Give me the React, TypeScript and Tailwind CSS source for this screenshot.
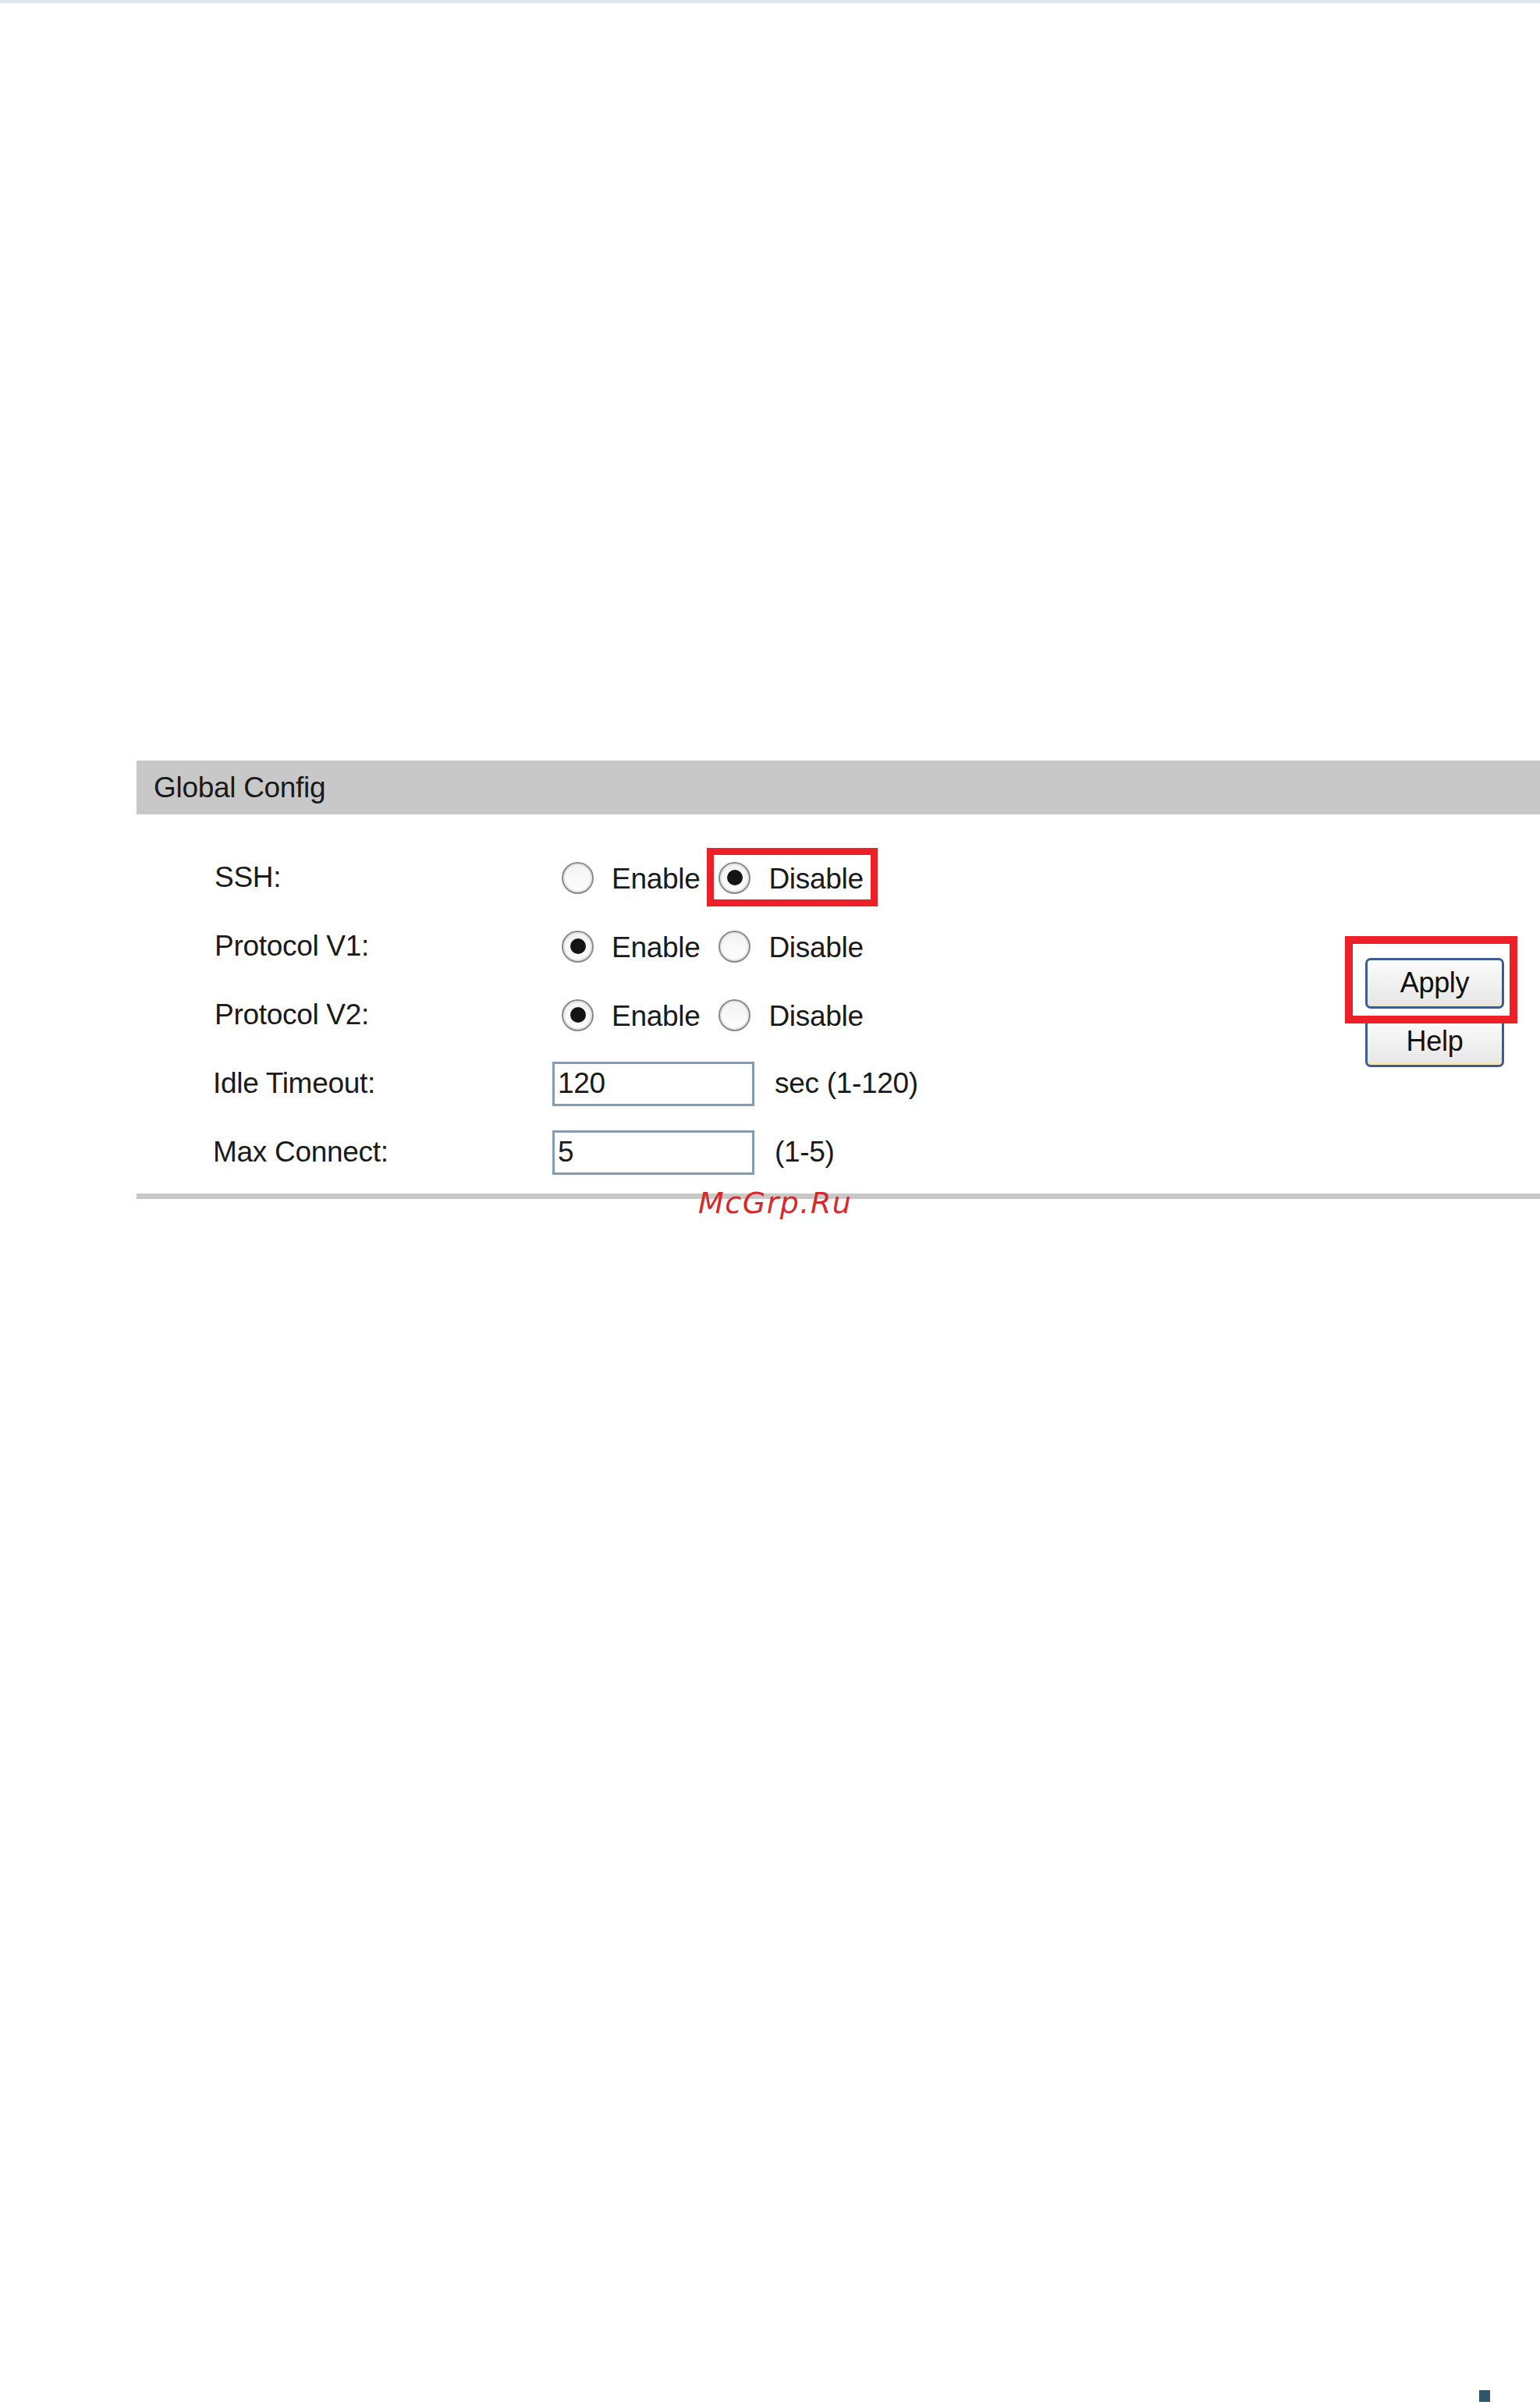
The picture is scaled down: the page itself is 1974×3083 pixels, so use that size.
const Radio = ({ checked }: { checked?: boolean }) => (
  <span className="flex h-[41px] w-[41px] shrink-0 items-center justify-center rounded-full border-[2px] border-[#8a8a8a] bg-gradient-to-b from-[#f2f2f2] to-white shadow-[inset_0_0_0_2px_#e4e4e4]">
    {checked && <span className="h-[20px] w-[20px] rounded-full bg-[#141414]" />}
  </span>
)

const Option = ({ label, checked, marked }: { label: string; checked?: boolean; marked?: boolean }) => (
  <span className="relative flex items-center gap-[23px]">
    <Radio checked={checked} />
    <span className="pt-[3px]">{label}</span>
    {marked && (
      <span className="pointer-events-none absolute -left-[15px] -top-[9px] h-[75px] w-[219px] border-[9px] border-[#ee2027]" />
    )}
  </span>
)

const RadioRow = ({ label, enabled, marked }: { label: string; enabled: boolean; marked?: boolean }) => (
  <div className="flex h-[88px] items-center">
    <div className="w-[435px] pl-[2px]">{label}</div>
    <div className="ml-[12px] flex items-center gap-[24px]">
      <Option label="Enable" checked={enabled} />
      <Option label="Disable" checked={!enabled} marked={marked} />
    </div>
  </div>
)

const InputRow = ({ label, value, hint }: { label: string; value: string; hint: string }) => (
  <div className="flex h-[88px] items-center">
    <div className="w-[435px]">{label}</div>
    <input
      readOnly
      value={value}
      className="h-[57px] w-[259px] border-[3px] border-[#7f9db9] bg-white pl-[4px] text-[#1a1a1a] outline-none"
    />
    <span className="ml-[26px]">{hint}</span>
  </div>
)

const Button = ({ children }: { children: string }) => (
  <button className="flex h-[65px] w-[178px] items-center justify-center rounded-[7px] border-[3px] border-[#3d5c94] bg-gradient-to-b from-[#fbfbfb] via-[#f1f1f1] to-[#e6e6e6] pb-[2px] text-[36px] leading-none text-[#111] shadow-[inset_0_-8px_0_-5px_#f3e6b8]">
    {children}
  </button>
)

export default function App() {
  return (
    <div className="relative flex h-[3083px] w-[1974px] flex-col bg-white font-['Liberation_Sans',Arial,sans-serif] text-[37px] tracking-[-0.3px] text-[#1a1a1a]">
      <div className="h-[4px] bg-[#dde7ec]" />

      <section className="ml-[175px] mt-[971px]">
        <div className="flex h-[69px] items-center bg-[#c8c8c8] pl-[22px]">Global Config</div>

        <div className="flex">
          <div className="flex-1 pl-[98px] pt-[37px]">
            <RadioRow label="SSH:" enabled={false} marked />
            <RadioRow label="Protocol V1:" enabled />
            <RadioRow label="Protocol V2:" enabled />
            <InputRow label="Idle Timeout:" value="120" hint="sec (1-120)" />
            <InputRow label="Max Connect:" value="5" hint="(1-5)" />
          </div>

          <div className="mr-[46px] flex w-[178px] flex-col gap-[10px] pt-[184px]">
            <div className="relative z-10">
              <Button>Apply</Button>
              <span className="pointer-events-none absolute -bottom-[19px] -left-[26px] -right-[17px] -top-[28px] border-[10px] border-[#ee2027]" />
            </div>
            <Button>Help</Button>
          </div>
        </div>

        <div className="mt-[9px] h-[7px] bg-[#c8c8c8]" />
      </section>

      {/* watermark over the divider */}
      <span className="pointer-events-none absolute left-[895px] top-[1523px] font-['DejaVu_Sans',sans-serif] text-[38px] italic leading-none tracking-[1.5px] text-[#d62a2a]">
        McGrp.Ru
      </span>

      <div className="mb-[4px] ml-[1896px] mt-auto h-[15px] w-[14px] bg-[#2e5568]" />
    </div>
  )
}
